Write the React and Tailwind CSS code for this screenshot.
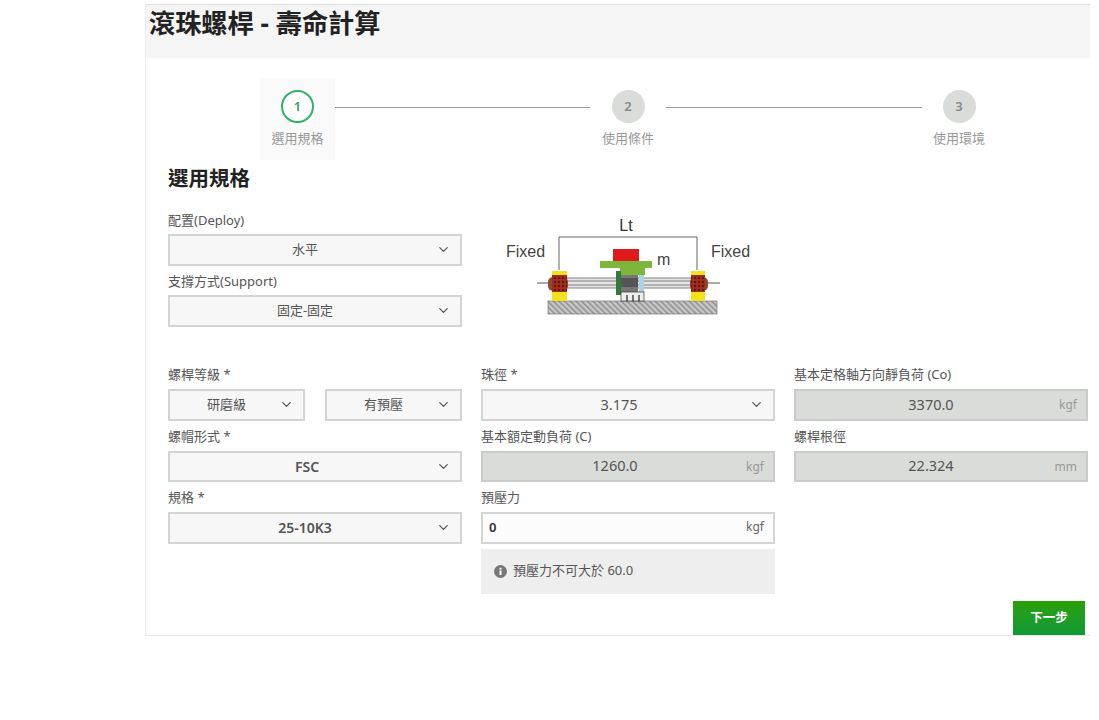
import React from "react";
import { ChevronDown } from "lucide-react";

const font = { fontFamily: '"Noto Sans", "Noto Sans CJK TC", sans-serif' };

function Select({ value, bold, large, className = "w-full", pad = "pr-[20px]" }) {
  const size = bold ? "text-[14px] font-semibold" : large ? "text-[14.5px]" : "text-[13px]";
  return (
    <div className={`relative h-[31.5px] border-2 border-[#d2d5d2] bg-[#f7f7f7] flex items-center justify-center text-[#555] ${pad} ${size} ${className}`}>
      <span>{value}</span>
      <ChevronDown className="absolute right-[9px] top-[6px] w-[15px] h-[15px] text-[#555]" strokeWidth={2} />
    </div>
  );
}

function Field({ label, tight, children }) {
  return (
    <div className={tight ? "mb-[5.5px]" : "mb-[5px]"}>
      <div className={`h-[20px] text-[13px] leading-[20px] text-[#555] ${tight ? "mb-[4px]" : "mb-[5px]"}`}>{label}</div>
      {children}
    </div>
  );
}

function Readout({ value, unit, pad = "pr-[20px]" }) {
  return (
    <div className={`relative h-[31.5px] border-2 border-[#c9ccc9] bg-[#d9dcd9] flex items-center justify-center text-[14.5px] text-[#555] ${pad}`}>
      <span>{value}</span>
      <span className="absolute right-[9px] top-[5px] text-[12px] text-[#999]">{unit}</span>
    </div>
  );
}

function Step({ n, label, active, className = "w-[75px]" }) {
  return (
    <div className={`h-[82px] pt-[12px] flex flex-col items-center shrink-0 ${active ? "bg-[#fafafa]" : ""} ${className}`}>
      <div className={`w-[33px] h-[33px] rounded-full flex items-center justify-center text-[13px] font-semibold ${active ? "border-2 border-[#2fb36b] text-[#3a9a60] bg-white" : "bg-[#d9dcd9] text-[#888]"}`}>
        {n}
      </div>
      <div className="mt-[5px] text-[13px] leading-[20px] text-[#999] whitespace-nowrap">{label}</div>
    </div>
  );
}

function Diagram() {
  return (
    <svg width="280" height="125" viewBox="0 0 280 125" className="block -mt-[5px] ml-[28px]">
      <defs>
        <pattern id="hatch" width="4" height="4" patternUnits="userSpaceOnUse" patternTransform="rotate(-45)">
          <rect width="4" height="4" fill="#c8c8c8" />
          <rect width="1.5" height="4" fill="#8e8e8e" />
        </pattern>
        <pattern id="nut" width="4" height="4" patternUnits="userSpaceOnUse">
          <rect width="4" height="4" fill="#a52a1c" />
          <rect width="2" height="2" fill="#4a2018" />
        </pattern>
      </defs>
      <path d="M69 65V32H207V65" fill="none" stroke="#666" strokeWidth="1" />
      <text x="136" y="26" textAnchor="middle" fontSize="16" fill="#333" fontFamily="Liberation Sans, sans-serif">Lt</text>
      <text x="16" y="52" fontSize="16" fill="#444" fontFamily="Liberation Sans, sans-serif">Fixed</text>
      <text x="221" y="52" fontSize="16" fill="#444" fontFamily="Liberation Sans, sans-serif">Fixed</text>
      <text x="167" y="60" fontSize="16" fill="#444" fontFamily="Liberation Sans, sans-serif">m</text>
      <rect x="58" y="96" width="169" height="13" fill="url(#hatch)" stroke="#777" strokeWidth="0.7" />
      <rect x="62" y="66" width="15" height="30" fill="#f2e21c" />
      <rect x="201" y="66" width="14" height="30" fill="#f2e21c" />
      <path d="M47 78H230" stroke="#555" strokeWidth="1" />
      <rect x="76" y="73" width="126" height="10" fill="#e4e4e4" />
      <path d="M76 73H202M76 76H202M76 80H202M76 83H202" stroke="#777" strokeWidth="0.9" />
      <rect x="58" y="72" width="20" height="14" rx="5" fill="#8a4a30" />
      <rect x="200" y="72" width="18" height="14" rx="5" fill="#8a4a30" />
      <rect x="62" y="70" width="15" height="17" fill="url(#nut)" />
      <rect x="201" y="70" width="14" height="17" fill="url(#nut)" />
      <rect x="123" y="44" width="26" height="12" fill="#e01a1a" />
      <path d="M110 56H162V63H155V70H130V63H110Z" fill="#7cb63a" />
      <rect x="126" y="66" width="5" height="24" fill="#2f7a3c" />
      <rect x="131" y="70" width="17" height="17" fill="#777" />
      <rect x="131" y="73" width="17" height="9" fill="#555" />
      <rect x="149" y="70" width="5" height="17" fill="#a8d4e6" />
      <rect x="131" y="87" width="23" height="9" fill="#eee" stroke="#333" strokeWidth="0.7" />
      <path d="M137 90V96M143 90V96M149 90V96" stroke="#222" strokeWidth="1.2" />
    </svg>
  );
}

export default function App() {
  return (
    <div className="w-[1099px] h-[720px] bg-white overflow-hidden pt-[4px] pl-[145px]" style={font}>
      <div className="w-[945px] h-[632px] flex flex-col border-t border-t-[#dcdcdc] border-b border-b-[#e6e6e6] border-l border-l-[#eeeeee]">
        <div className="h-[53px] bg-[#f5f5f5] pl-[3px] text-[26.2px] leading-[36px] font-bold text-[#222]">滾珠螺桿 - 壽命計算</div>

        <div className="mt-[20px] pl-[114px] flex items-start">
          <Step n="1" label="選用規格" active />
          <div className="w-[255px] h-[1px] mt-[29px] bg-[#999] shrink-0" />
          <Step n="2" label="使用條件" className="w-[76px]" />
          <div className="w-[256px] h-[1px] mt-[29px] bg-[#999] shrink-0" />
          <Step n="3" label="使用環境" className="w-[74px]" />
        </div>

        <div className="pl-[22px] w-[943px]">
          <h2 className="h-[36px] text-[20.5px] leading-[36px] font-bold text-[#222]">選用規格</h2>

          <div className="mt-[14px] flex items-start">
            <div className="w-[294px] shrink-0">
              <Field tight label="配置(Deploy)"><Select value="水平" /></Field>
              <Field tight label="支撐方式(Support)"><Select value="固定-固定" /></Field>
            </div>
            <Diagram />
          </div>

          <div className="mt-[32px] grid grid-cols-[294px_294px_294px] gap-x-[19px] items-start">
            <div>
              <Field label="螺桿等級 *">
                <div className="flex gap-[20px]">
                  <Select value="研磨級" className="w-[137px]" />
                  <Select value="有預壓" className="w-[137px]" />
                </div>
              </Field>
              <Field label="螺帽形式 *"><Select value="FSC" bold pad="pr-[16px]" /></Field>
              <Field label="規格 *"><Select value="25-10K3" bold /></Field>
            </div>
            <div>
              <Field label="珠徑 *"><Select value="3.175" large pad="pr-[18px]" /></Field>
              <Field label="基本額定動負荷 (C)"><Readout value="1260.0" unit="kgf" pad="pr-[26px]" /></Field>
              <Field label="預壓力">
                <div className="relative h-[31.5px] border-2 border-[#d2d5d2] bg-[#fcfcfc] pl-[6px] flex items-center text-[13px] font-semibold text-[#333]">
                  <span>0</span>
                  <span className="absolute right-[9px] top-[4px] text-[12px] font-normal text-[#666]">kgf</span>
                </div>
                <div className="mt-[5px] h-[45px] bg-[#eeeeee] pl-[13px] flex items-center gap-[6px] text-[13px] text-[#555]">
                  <svg width="13" height="13" viewBox="0 0 13 13" className="shrink-0">
                    <circle cx="6.5" cy="6.5" r="6.5" fill="#777" />
                    <rect x="5.5" y="5.5" width="2" height="4.5" fill="#fff" />
                    <rect x="5.5" y="2.8" width="2" height="1.8" fill="#fff" />
                  </svg>
                  <span>預壓力不可大於 60.0</span>
                </div>
              </Field>
            </div>
            <div>
              <Field label="基本定格軸方向靜負荷 (Co)"><Readout value="3370.0" unit="kgf" /></Field>
              <Field label="螺桿根徑"><Readout value="22.324" unit="mm" /></Field>
            </div>
          </div>
        </div>

        <div className="mt-auto flex justify-end pr-[5px]">
          <button className="w-[72px] h-[34px] bg-gradient-to-b from-[#2aa000] to-[#0f9a35] text-white text-[12.5px] font-bold">下一步</button>
        </div>
      </div>
    </div>
  );
}
